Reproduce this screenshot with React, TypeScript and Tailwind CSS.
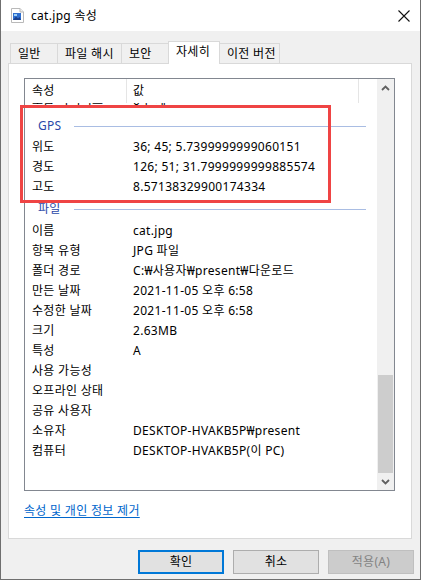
const font = { fontFamily: '"Noto Sans", "Noto Sans CJK KR", sans-serif' };

type Row = { k: string; v?: string };

const gps: Row[] = [
  { k: "위도", v: "36; 45; 5.7399999999060151" },
  { k: "경도", v: "126; 51; 31.7999999999885574" },
  { k: "고도", v: "8.57138329900174334" },
];

const file: Row[] = [
  { k: "이름", v: "cat.jpg" },
  { k: "항목 유형", v: "JPG 파일" },
  { k: "폴더 경로", v: "C:₩사용자₩present₩다운로드" },
  { k: "만든 날짜", v: "2021-11-05 오후 6:58" },
  { k: "수정한 날짜", v: "2021-11-05 오후 6:58" },
  { k: "크기", v: "2.63MB" },
  { k: "특성", v: "A" },
  { k: "사용 가능성" },
  { k: "오프라인 상태" },
  { k: "공유 사용자" },
  { k: "소유자", v: "DESKTOP-HVAKB5P₩present" },
  { k: "컴퓨터", v: "DESKTOP-HVAKB5P(이 PC)" },
];

function PropRow({ k, v }: Row) {
  return (
    <div className="flex h-5 items-center whitespace-nowrap text-[12px] text-black">
      <div className="w-[108px] pl-[7px]">{k}</div>
      <div>{v}</div>
    </div>
  );
}

function Group({ label, h }: { label: string; h: string }) {
  return (
    <div className={`flex items-center pl-[13px] pr-[11px] ${h}`}>
      <span className="text-[12px] text-[#2a48a8]">{label}</span>
      <div className="ml-[13px] h-px flex-1 bg-[#a9bde3]" />
    </div>
  );
}

function Chevron({ up }: { up?: boolean }) {
  return (
    <svg width="9" height="6" viewBox="0 0 9 6">
      <path
        d={up ? "M1 5 L4.5 1.5 L8 5" : "M1 1 L4.5 4.5 L8 1"}
        fill="none"
        stroke="#606060"
        strokeWidth="1.8"
      />
    </svg>
  );
}

export default function App() {
  const tabs = [
    { t: "일반", w: "w-[48px]" },
    { t: "파일 해시", w: "w-[65px]" },
    { t: "보안", w: "w-[48px]" },
    { t: "자세히", w: "w-[52px]", on: true },
    { t: "이전 버전", w: "w-[61px]" },
  ];

  return (
    <div
      className="relative flex h-[580px] w-[421px] flex-col border-x border-b border-[#6f6f6f] bg-[#f0f0f0] tracking-[0.3px]"
      style={font}
    >
      {/* title bar */}
      <div className="flex h-[31px] items-center bg-white">
        <svg className="ml-[10px]" width="13" height="15" viewBox="0 0 13 15">
          <path d="M0.5 0.5 H9 L12.5 4 V14.5 H0.5 Z" fill="#fff" stroke="#b9b9b9" />
          <path d="M9 0.5 V4 H12.5" fill="#eee" stroke="#b9b9b9" />
          <rect x="2" y="5" width="8" height="7" fill="#2f6fcf" />
          <rect x="3" y="6" width="3" height="2" fill="#9fd0f5" />
          <path d="M2 12 L5 8.5 L7 10.5 L8.5 9 L10 12 Z" fill="#1a3f8a" />
        </svg>
        <span className="ml-[7px] text-[12px] text-black">cat.jpg 속성</span>
        <svg className="ml-auto mr-[10px]" width="12" height="12" viewBox="0 0 12 12">
          <path d="M0.5 0.5 L11.5 11.5 M11.5 0.5 L0.5 11.5" stroke="#111" strokeWidth="1.1" />
        </svg>
      </div>

      {/* tabs */}
      <div className="relative z-10 ml-[9px] mt-[10px] flex items-end">
        {tabs.map((tab, i) => (
          <div
            key={tab.t}
            className={`${tab.w} ${i > 0 ? "-ml-px" : ""} flex items-center border border-b-0 border-[#d9d9d9] text-[12px] text-black ${
              tab.on
                ? "-mb-px h-[23px] bg-white pl-[7px] pb-[2px]"
                : "h-[20px] bg-[#f0f0f0] pl-[7px]"
            }`}
          >
            {tab.t}
          </div>
        ))}
      </div>

      {/* panel */}
      <div className="ml-[7px] h-[476px] w-[404px] border border-[#d9d9d9] bg-white">
        <div className="ml-[15px] mt-[14px] flex h-[413px] w-[371px] border border-[#828790] bg-white">
          <div className="flex-1 overflow-hidden">
            {/* header */}
            <div className="flex h-[24px] text-[12px] text-black">
              <div className="flex w-[102px] items-center border-r border-[#e5e5e5] pl-[7px]">속성</div>
              <div className="flex w-[232px] items-center border-r border-[#e5e5e5] pl-[6px]">값</div>
            </div>
            {/* row scrolled under the header */}
            <div className="h-[5px] overflow-hidden">
              <div className="-mt-[12px]">
                <PropRow k="노출 바이어스" v="0 단계" />
              </div>
            </div>
            <Group label="GPS" h="h-[29px] pt-[7px]" />
            {gps.map((r) => (
              <PropRow key={r.k} {...r} />
            ))}
            <Group label="파일" h="h-6" />
            {file.map((r) => (
              <PropRow key={r.k} {...r} />
            ))}
          </div>
          {/* scrollbar */}
          <div className="flex w-[17px] flex-col bg-[#f0f0f0]">
            <div className="flex h-[17px] items-center justify-center">
              <Chevron up />
            </div>
            <div className="flex flex-1 flex-col justify-end">
              <div className="mx-px h-[98px] bg-[#cdcdcd]" />
            </div>
            <div className="flex h-[17px] items-center justify-center">
              <Chevron />
            </div>
          </div>
        </div>
        <div className="ml-[15px] mt-[12px] text-[12px] leading-4">
          <span className="text-[#0066cc] underline underline-offset-2">속성 및 개인 정보 제거</span>
        </div>
      </div>

      {/* buttons */}
      <div className="mt-[11px] flex gap-[9px] pl-[137px] text-[12px]">
        <div className="flex h-[24px] w-[86px] items-center justify-center border-2 border-[#0078d7] bg-[#e1e1e1] text-black">
          확인
        </div>
        <div className="flex h-[24px] w-[86px] items-center justify-center border border-[#adadad] bg-[#e1e1e1] text-black">
          취소
        </div>
        <div className="flex h-[24px] w-[86px] items-center justify-center border border-[#bfbfbf] bg-[#cccccc] text-[#838383]">
          적용(A)
        </div>
      </div>

      {/* annotation */}
      <div className="absolute left-[19px] top-[105px] h-[98px] w-[311px] border-[3px] border-[#ef4444]" />
    </div>
  );
}
